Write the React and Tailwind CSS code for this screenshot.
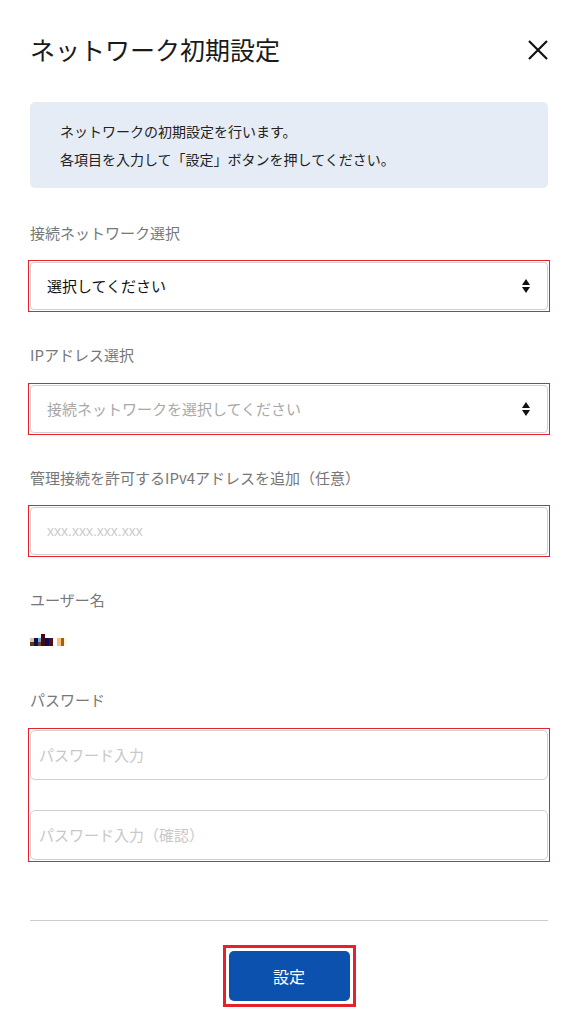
import React from "react";

const font = { fontFamily: '"Noto Sans CJK JP", "Noto Sans", sans-serif' };

const SelectArrows = () => (
  <svg width="10" height="16" viewBox="0 0 10 16" className="shrink-0">
    <path d="M5 1 L9 7 L1 7 Z" fill="#111" />
    <path d="M1 9 L9 9 L5 15 Z" fill="#111" />
  </svg>
);

const Label = ({ children, className = "" }) => (
  <div className={`text-[15px] leading-[24px] text-[#777] ${className}`}>{children}</div>
);

const Marked = ({ children, className = "" }) => (
  <div className={`border border-[#e6212b] p-px ${className}`}>{children}</div>
);

const SelectBox = ({ text, placeholder }) => (
  <div className="flex items-center justify-between h-[48px] border border-[#cfcfcf] rounded-[4px] pl-[16px] pr-[16px]">
    <span className={`text-[15px] ${placeholder ? "text-[#a8a8a8]" : "text-[#111]"}`}>{text}</span>
    <SelectArrows />
  </div>
);

export default function App() {
  return (
    <div className="w-[580px] h-[1030px] bg-white pl-[30px] pr-[32px]" style={font}>
      {/* Header */}
      <div className="flex items-center justify-between h-[52px] mt-[24px]">
        <h1 className="text-[25px] text-[#1a1a1a] font-normal">ネットワーク初期設定</h1>
        <svg width="22" height="22" viewBox="0 0 22 22" className="-mr-[1px]">
          <path d="M2 2 L20 20 M20 2 L2 20" stroke="#111" strokeWidth="2.2" />
        </svg>
      </div>

      {/* Info */}
      <div className="mt-[26px] bg-[#e6ecf5] rounded-[5px] pl-[30px] py-[15px] text-[14px] leading-[28px] text-[#222]">
        <p>ネットワークの初期設定を行います。</p>
        <p>各項目を入力して「設定」ボタンを押してください。</p>
      </div>

      {/* Connection network */}
      <Label className="mt-[33px]">接続ネットワーク選択</Label>
      <Marked className="mt-[15px] -mx-[2px]">
        <SelectBox text="選択してください" />
      </Marked>

      {/* IP address */}
      <Label className="mt-[31px]">IPアドレス選択</Label>
      <Marked className="mt-[16px] -mx-[2px]">
        <SelectBox text="接続ネットワークを選択してください" placeholder />
      </Marked>

      {/* Allowed IPv4 */}
      <Label className="mt-[31px]">管理接続を許可するIPv4アドレスを追加（任意）</Label>
      <Marked className="mt-[15px] -mx-[2px]">
        <div className="flex items-center h-[48px] border border-[#cfcfcf] rounded-[4px] pl-[16px]">
          <span className="text-[14px] text-[#cccccc]" style={{ fontFamily: '"Liberation Sans", sans-serif' }}>
            xxx.xxx.xxx.xxx
          </span>
        </div>
      </Marked>

      {/* Username */}
      <Label className="mt-[31px]">ユーザー名</Label>
      <div className="mt-[22px] flex items-end h-[12px]">
        <div className="flex flex-col"><div className="w-[4px] h-[4px] bg-[#dcc3a8]" /><div className="w-[4px] h-[4px] bg-[#5a3a22]" /></div>
        <div className="w-[4px] h-[8px] bg-[#0b1050]" />
        <div className="flex flex-col"><div className="w-[3px] h-[4px] bg-[#6aa8d8]" /><div className="w-[3px] h-[4px] bg-[#6a4a2a]" /></div>
        <div className="w-[4px] h-[12px] bg-[#4a0810]" />
        <div className="w-[4px] h-[8px] bg-[#0b1050]" />
        <div className="w-[4px] h-[8px] bg-[#5a0a18]" />
        <div className="w-[4px] h-[8px] bg-white" />
        <div className="w-[4px] h-[8px] bg-[#f5c27a]" />
        <div className="w-[3px] h-[8px] bg-[#b05a10]" />
        <div className="w-[3px] h-[8px] bg-[#fdf8e0]" />
      </div>

      {/* Password */}
      <Label className="mt-[42px]">パスワード</Label>
      <Marked className="mt-[16px] -mx-[2px]">
        <div className="flex flex-col gap-[30px]">
          <div className="flex items-center h-[50px] border border-[#cfcfcf] rounded-[5px] pl-[8px]">
            <span className="text-[15px] text-[#c8c8c8]">パスワード入力</span>
          </div>
          <div className="flex items-center h-[50px] border border-[#cfcfcf] rounded-[5px] pl-[8px]">
            <span className="text-[15px] text-[#c8c8c8]">パスワード入力（確認）</span>
          </div>
        </div>
      </Marked>

      {/* Footer */}
      <div className="mt-[58px] border-t border-[#cccccc]" />
      <div className="mt-[24px] flex justify-center">
        <div className="border-[3px] border-[#e6212b] p-[3px]">
          <button className="w-[121px] h-[50px] bg-[#0b51ad] rounded-[5px] text-white text-[16px]">設定</button>
        </div>
      </div>
    </div>
  );
}
